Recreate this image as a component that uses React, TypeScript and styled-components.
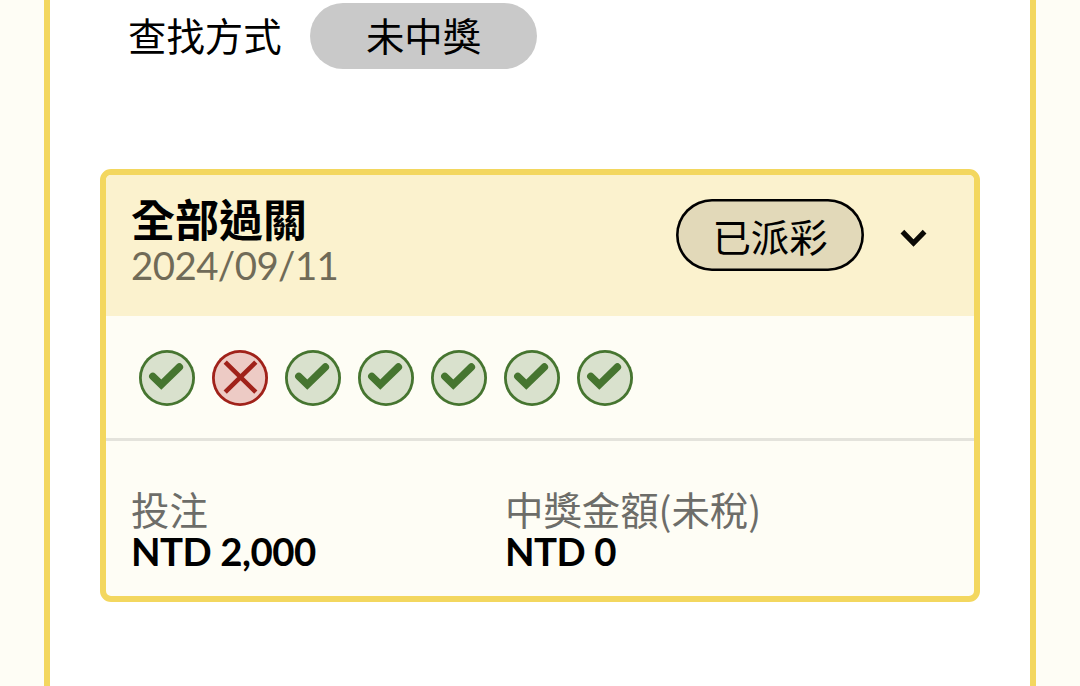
import styled, { createGlobalStyle } from "styled-components";

interface Bet {
  title: string;
  date: string;
  status: string;
  results: boolean[];
  amounts: { label: string; value: string }[];
}

const bet: Bet = {
  title: "全部過關",
  date: "2024/09/11",
  status: "已派彩",
  results: [true, false, true, true, true, true, true],
  amounts: [
    { label: "投注", value: "NTD 2,000" },
    { label: "中獎金額(未稅)", value: "NTD 0" },
  ],
};

const ResultIcon: React.FC<{ win: boolean }> = ({ win }) => (
  <Result $win={win}>
    <svg width="56" height="56" viewBox="0 0 56 56" fill="none">
      {win ? (
        <path
          d="M13.8 26.3L22.3 34.6L40.4 17"
          stroke="#467530"
          strokeWidth="7.4"
          strokeLinecap="round"
        />
      ) : (
        <path
          d="M13.2 12.2L43.8 42.2M43.8 12.2L13.2 42.2"
          stroke="#a0221a"
          strokeWidth="4.6"
        />
      )}
    </svg>
  </Result>
);

const BetCard: React.FC<{ bet: Bet }> = ({ bet }) => (
  <Card>
    <CardHeader>
      <div>
        <Title>{bet.title}</Title>
        <DateText>{bet.date}</DateText>
      </div>
      <HeaderRight>
        <StatusBadge>{bet.status}</StatusBadge>
        <ToggleButton type="button" aria-label="toggle">
          <svg width="28" height="20" viewBox="0 0 28 20" fill="none">
            <path d="M2.4 3.6L13.5 15L24.6 3.6" stroke="#0b0a06" strokeWidth="5.2" />
          </svg>
        </ToggleButton>
      </HeaderRight>
    </CardHeader>
    <ResultList>
      {bet.results.map((win, index) => (
        <ResultIcon key={index} win={win} />
      ))}
    </ResultList>
    <AmountRow>
      {bet.amounts.map((amount) => (
        <div key={amount.label}>
          <AmountLabel>{amount.label}</AmountLabel>
          <AmountValue>{amount.value}</AmountValue>
        </div>
      ))}
    </AmountRow>
  </Card>
);

const App: React.FC = () => {
  return (
    <>
      <GlobalStyle />
      <Container>
        <FilterRow>
          <FilterLabel>查找方式</FilterLabel>
          <FilterButton type="button">未中獎</FilterButton>
        </FilterRow>
        <BetCard bet={bet} />
      </Container>
    </>
  );
};

export default App;

const GlobalStyle = createGlobalStyle`
  * {
    box-sizing: border-box;
  }

  body {
    margin: 0;
    background: #fefdf5;
    color: #000;
    font-family: Lato, "Noto Sans CJK TC", sans-serif;
    font-size: 38.4px;
    overflow: hidden;
  }

  button {
    font: inherit;
    color: inherit;
    border: none;
    padding: 0;
    cursor: pointer;
  }
`;

const Container = styled.main`
  width: 992px;
  height: 686px;
  margin-left: 44px;
  padding: 3px 50px 0;
  background: #fff;
  border: solid #f3d75f;
  border-width: 0 6px;
`;

const FilterRow = styled.div`
  display: flex;
  align-items: center;
  gap: 28px;
  height: 66px;
  margin-bottom: 100px;
  padding-left: 28px;
`;

const FilterLabel = styled.span`
  width: 154px;
  height: 66px;
  font-family: "Noto Sans CJK TC", sans-serif;
  font-weight: 400;
  line-height: 62px;
  white-space: nowrap;
`;

const FilterButton = styled.button`
  width: 227px;
  height: 66px;
  padding-bottom: 4px;
  border-radius: 33px;
  background: #c9c9c9;
  font-family: "Noto Sans CJK TC", sans-serif;
  font-weight: 400;
  line-height: 62px;
`;

const Card = styled.section`
  height: 433px;
  border: 6px solid #f3d75f;
  border-radius: 11px;
  background: #fefdf5;
  overflow: hidden;
`;

const CardHeader = styled.header`
  display: flex;
  justify-content: space-between;
  height: 141px;
  padding: 18px 46px 0 25px;
  background: #fbf2ce;
`;

const Title = styled.h2`
  height: 49px;
  margin: 0;
  font-family: "Noto Sans CJK TC", sans-serif;
  font-size: 44px;
  font-weight: 700;
  line-height: 51px;
`;

const DateText = styled.div`
  height: 46px;
  color: #706b58;
  letter-spacing: -0.55px;
  line-height: 46px;
`;

const HeaderRight = styled.div`
  display: flex;
  align-items: center;
  gap: 36px;
  height: 72px;
  margin-top: 6px;
`;

const StatusBadge = styled.span`
  width: 188px;
  height: 72px;
  border-radius: 36px;
  background: #e2d9b9;
  box-shadow: inset 0 0 0 2.6px #000;
  font-family: "Noto Sans CJK TC", sans-serif;
  font-weight: 400;
  line-height: 73px;
  text-align: center;
`;

const ToggleButton = styled.button`
  display: flex;
  padding-top: 5px;
  background: none;
`;

const ResultList = styled.div`
  display: flex;
  gap: 17px;
  height: 125px;
  padding: 34px 33px 0;
  border-bottom: 3px solid #e4e3dc;
`;

const Result = styled.span<{ $win: boolean }>`
  width: 56px;
  height: 56px;
  border-radius: 50%;
  background: ${({ $win }) => ($win ? "#d9e1cd" : "#edcbc5")};
  box-shadow: inset 0 0 0 2.8px ${({ $win }) => ($win ? "#467530" : "#a0221a")};
`;

const AmountRow = styled.div`
  display: grid;
  grid-template-columns: 374px 1fr;
  padding: 45px 25px 0;
`;

const AmountLabel = styled.div`
  height: 43px;
  color: #6d6d69;
  font-family: "Noto Sans CJK TC", sans-serif;
  font-weight: 400;
  line-height: 44px;
`;

const AmountValue = styled.div`
  height: 44px;
  font-weight: 700;
  letter-spacing: -0.5px;
  line-height: 45px;
`;
